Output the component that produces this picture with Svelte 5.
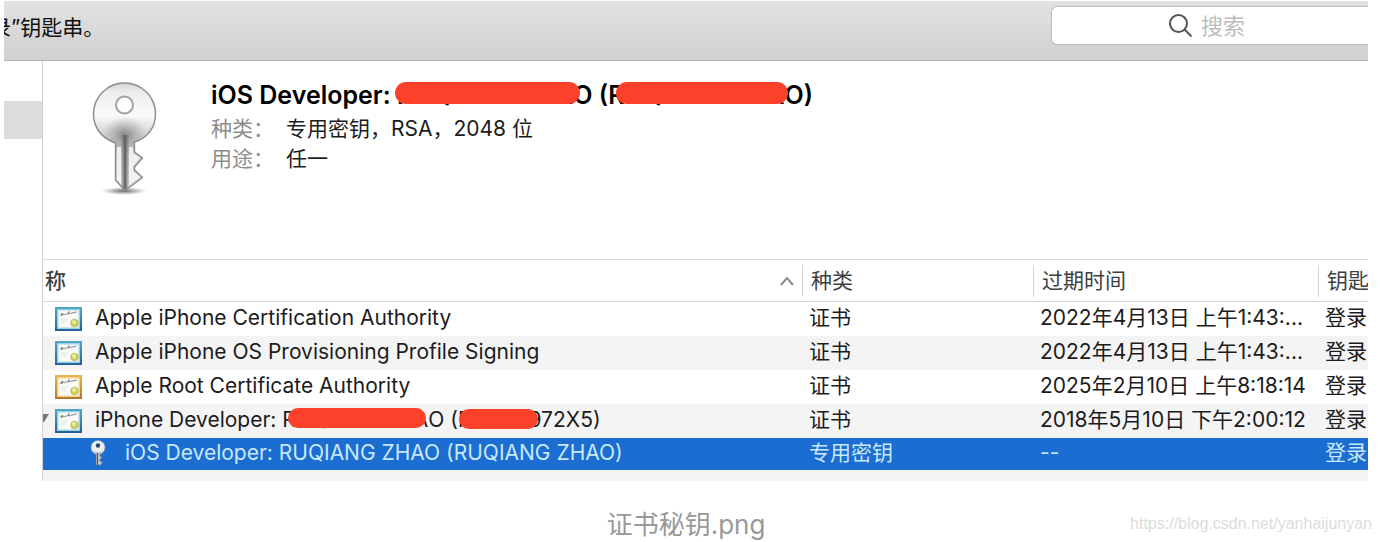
<script>
    const columns = [
        { key: "name", label: "称", sorted: true },
        { key: "kind", label: "种类" },
        { key: "expires", label: "过期时间" },
        { key: "keychain", label: "钥匙" },
    ];

    const items = [
        { icon: "blue", name: "Apple iPhone Certification Authority", kind: "证书", expires: "2022年4月13日 上午1:43:...", keychain: "登录" },
        { icon: "blue", name: "Apple iPhone OS Provisioning Profile Signing", kind: "证书", expires: "2022年4月13日 上午1:43:...", keychain: "登录" },
        { icon: "gold", name: "Apple Root Certificate Authority", kind: "证书", expires: "2025年2月10日 上午8:18:14", keychain: "登录" },
        { icon: "blue", name: "iPhone Developer: ", redacted: true, kind: "证书", expires: "2018年5月10日 下午2:00:12", keychain: "登录" },
        { icon: "key", name: "iOS Developer: RUQIANG ZHAO (RUQIANG ZHAO)", kind: "专用密钥", expires: "--", keychain: "登录" },
    ];

    let selected = $state(4);
    let query = $state("");
</script>

{#snippet certificate(tone)}
    <svg class="cert" viewBox="0 0 27 24" aria-hidden="true">
        <defs>
            <linearGradient id="frame-blue" x1="0" y1="0" x2="0" y2="1">
                <stop offset="0" stop-color="#4fa9c6" />
                <stop offset="1" stop-color="#245f9c" />
            </linearGradient>
            <linearGradient id="frame-gold" x1="0" y1="0" x2="0" y2="1">
                <stop offset="0" stop-color="#e9b752" />
                <stop offset="1" stop-color="#b87428" />
            </linearGradient>
        </defs>
        <rect width="27" height="24" fill="url(#frame-{tone})" />
        <rect x="2" y="2" width="23" height="20" fill={tone === "gold" ? "#f3d48e" : "#9bd3e6"} />
        <rect x="3.5" y="3.5" width="20" height="17" fill="#fbfcf9" />
        <path d="M5.500 8.500q1.500-3.500 2.200-1.800-.7 2-1.600 1.500 1.600.2 2.600-1 1 1.200 2-.4 1 1.300 2-.2l1.300-2-.6 2.200q1.600.2 2.400-1 .9 1.300 2-.1 1.300 1 2.300-.7l1.500.3" fill="none" stroke="#6b6c74" stroke-width=".9" />
        <path d="M6 12h7M6 14h6M7 16h4" stroke="#cfdae0" stroke-width=".7" />
        <circle cx="19.500" cy="16" r="3.800" fill="#cfcf5c" stroke="#aaa94b" stroke-width=".6" />
        <circle cx="19" cy="15" r="2" fill="#efedA0" />
    </svg>
{/snippet}

<figure>
    <div class="window">
        <header class="toolbar">
            <p class="hint">录”钥匙串。</p>
            <label class="search">
                <svg viewBox="0 0 24 24" aria-hidden="true">
                    <circle cx="9.500" cy="9.500" r="8.500" />
                    <path d="M15.500 15.500l7 7" />
                </svg>
                <input type="text" placeholder="搜索" aria-label="搜索" bind:value={query} />
            </label>
        </header>

        <div class="body">
            <aside><div class="current"></div></aside>

            <main>
                <section class="detail">
                    <svg class="big-key" viewBox="0 0 66 116" aria-hidden="true">
                        <defs>
                            <linearGradient id="metal" x1="0" y1="0" x2="0" y2="1">
                                <stop offset="0" stop-color="#cfcfcf" />
                                <stop offset=".1" stop-color="#ededed" />
                                <stop offset=".3" stop-color="#fafafa" />
                                <stop offset=".42" stop-color="#dcdcdc" />
                                <stop offset=".56" stop-color="#c4c4c4" />
                                <stop offset="1" stop-color="#e2e2e2" />
                            </linearGradient>
                            <radialGradient id="glow">
                                <stop offset="0" stop-color="#6c6c6c" stop-opacity=".75" />
                                <stop offset="1" stop-color="#999" stop-opacity="0" />
                            </radialGradient>
                            <linearGradient id="stem" x1="0" y1="0" x2="1" y2="0">
                                <stop offset="0" stop-color="#777" stop-opacity="0" />
                                <stop offset=".5" stop-color="#5a5a5a" />
                                <stop offset="1" stop-color="#777" stop-opacity="0" />
                            </linearGradient>
                            <radialGradient id="shadow">
                                <stop offset="0" stop-color="#333" stop-opacity=".75" />
                                <stop offset="1" stop-color="#666" stop-opacity="0" />
                            </radialGradient>
                            <clipPath id="key-clip">
                                <path d="M24.500 62C10 57 2.500 46 2.500 33a31 31 0 0 1 62 0c0 13-7.500 24-21 28v10l8 6-8 9v3l8 7.500-17.500 13L24.500 99z" />
                            </clipPath>
                        </defs>
                        <ellipse cx="33" cy="110" rx="23" ry="4" fill="url(#shadow)" />
                        <g clip-path="url(#key-clip)">
                            <rect width="66" height="116" fill="url(#metal)" />
                            <ellipse cx="33.500" cy="54" rx="23" ry="19" fill="url(#glow)" />
                            <path d="M26 66v33l4 5V66z" fill="#fff" opacity=".7" />
                            <path d="M38 66v38l11-8-7-6v-5l7-8-7-5v-6z" fill="#fff" opacity=".7" />
                            <rect x="29.500" y="54" width="9" height="56" fill="url(#stem)" />
                        </g>
                        <path
                            fill="none"
                            stroke="#8a8a8a"
                            stroke-width="1.400"
                            stroke-linejoin="round"
                            d="M24.500 62C10 57 2.500 46 2.500 33a31 31 0 0 1 62 0c0 13-7.500 24-21 28v10l8 6-8 9v3l8 7.500-17.500 13L24.500 99z"
                        />
                        <circle cx="33.500" cy="24" r="8.500" fill="#fff" stroke="#a2a2a2" stroke-width="2" />
                    </svg>
                    <div class="info">
                        <h1>iOS Developer: <span class="redacted">RUQIANG ZHA</span>O (R<span class="redacted wide">UQIANG ZHA</span>O)</h1>
                        <dl>
                            <dt>种类：</dt>
                            <dd>专用密钥，RSA，2048 位</dd>
                            <dt>用途：</dt>
                            <dd>任一</dd>
                        </dl>
                    </div>
                </section>

                <table>
                    <thead>
                        <tr>
                            {#each columns as column}
                                <th class={column.key}>
                                    <div>
                                        {column.label}
                                        {#if column.sorted}
                                            <svg class="sort" viewBox="0 0 14 10" aria-hidden="true"><path d="M1 9l6-7 6 7" /></svg>
                                        {/if}
                                    </div>
                                </th>
                            {/each}
                        </tr>
                    </thead>
                    <tbody>
                        {#each items as item, i}
                            <tr class:selected={selected === i} onclick={() => (selected = i)}>
                                <td>
                                    <div class="name" class:child={item.icon === "key"}>
                                        {#if item.icon === "key"}
                                            <svg class="small-key" viewBox="0 0 16 27" aria-hidden="true">
                                                <path d="M6 13h4v3l2 1.500-2 1.500v2l2.500 1.500-2 2.500H6z" fill="#c9cbd0" stroke="#65748c" stroke-width=".6" />
                                                <circle cx="8" cy="7.500" r="7" fill="#eceef1" stroke="#8a98ae" stroke-width=".6" />
                                                <path d="M3 10.500a7 7 0 0 0 10 0l-3 4H6z" fill="#b4b7be" />
                                                <circle cx="8" cy="5.500" r="2.200" fill="#20477f" />
                                                <path d="M7.500 13v12" stroke="#54565c" stroke-width="1.200" />
                                            </svg>
                                        {:else}
                                            {@render certificate(item.icon)}
                                        {/if}
                                        {#if item.redacted}
                                            <svg class="disclosure" viewBox="0 0 6 10" aria-hidden="true"><path d="M0 0h6L1 8H0z" /></svg>
                                            <span>{item.name}R<span class="redacted wide">UQIANG ZHA</span>O (R<span class="redacted blank"></span>972X5)</span>
                                        {:else}
                                            <span>{item.name}</span>
                                        {/if}
                                    </div>
                                </td>
                                <td>{item.kind}</td>
                                <td>{item.expires}</td>
                                <td>{item.keychain}</td>
                            </tr>
                        {/each}
                    </tbody>
                </table>
                <div class="next-row"></div>
            </main>
        </div>
    </div>
    <figcaption>证书秘钥.png</figcaption>
    <span class="watermark">https://blog.csdn.net/yanhaijunyan</span>
</figure>

<style>
    :global(body) {
        background: #fff;
    }

    figure {
        position: relative;
        margin: 0;
        padding: 1px 12px 0 4px;
        font-family: Inter, "Noto Sans CJK SC", sans-serif;
        color: #1c1c1c;
    }

    .window {
        overflow: hidden;
    }

    .toolbar {
        display: flex;
        justify-content: space-between;
        align-items: flex-start;
        height: 60px;
        box-sizing: border-box;
        padding-top: 5px;
        background: linear-gradient(#e2e2e2, #d0d0d0);
        border-bottom: 1px solid #b4b4b4;
    }

    .hint {
        margin: 6px 0 0 -14px;
        font-size: 21px;
        line-height: 32px;
        color: #111;
    }

    .search {
        display: flex;
        align-items: center;
        gap: 8px;
        width: 317px;
        height: 39px;
        box-sizing: border-box;
        padding-left: 117px;
        background: #fff;
        border: 1px solid #bcbcbc;
        border-right: 0;
        border-radius: 6px 0 0 6px;
    }

    .search svg {
        flex: none;
        width: 24px;
        height: 24px;
        fill: none;
        stroke: #555;
        stroke-width: 2;
    }

    .search input {
        flex: 1;
        min-width: 0;
        padding: 0;
        border: 0;
        outline: 0;
        background: none;
        font: inherit;
        font-size: 22px;
    }

    .search input::placeholder {
        color: #bdbdbd;
    }

    .body {
        display: flex;
    }

    aside {
        flex: none;
        width: 38px;
        padding-top: 40px;
        border-right: 1px solid #d2d2d2;
    }

    .current {
        height: 38px;
        background: #dcdcdc;
    }

    main {
        flex: 1;
        min-width: 0;
    }

    .detail {
        display: flex;
        gap: 54px;
        height: 178px;
        padding: 20px 0 0 48px;
    }

    .big-key {
        flex: none;
        width: 66px;
        height: 116px;
    }

    h1 {
        margin: 0;
        font-size: 25px;
        line-height: 28px;
        font-weight: 600;
        color: #000;
    }

    .redacted {
        position: relative;
    }

    .redacted::after {
        content: "";
        position: absolute;
        top: 2px;
        bottom: 6px;
        left: -2px;
        right: -7px;
        background: #fc412a;
        border-radius: 12px;
    }

    .redacted.wide::after {
        left: -8px;
        right: -4px;
    }

    .name .redacted.wide::after {
        top: 1px;
        bottom: 4px;
        right: 2px;
    }

    .redacted.blank {
        display: inline-block;
        width: 57px;
        height: 30px;
        vertical-align: bottom;
    }

    .redacted.blank::after {
        top: 4px;
        left: -13px;
        right: -9px;
    }

    dl {
        display: grid;
        grid-template-columns: 75px 1fr;
        margin: 5px 0 0;
        font-size: 21px;
        line-height: 30px;
    }

    dt {
        color: #8c8c8c;
    }

    dd {
        margin: 0;
    }

    table {
        width: 100%;
        table-layout: fixed;
        border-collapse: collapse;
        border-top: 1px solid #dadada;
        font-size: 21px;
        line-height: 30px;
    }

    th {
        height: 42px;
        box-sizing: border-box;
        padding: 0;
        text-align: left;
        font-weight: 400;
        color: #404040;
        border-bottom: 1px solid #dadada;
    }

    th div {
        display: flex;
        justify-content: space-between;
        align-items: center;
        height: 32px;
        padding: 0 8px;
        border-left: 1px solid #d4d4d4;
        white-space: nowrap;
    }

    th.name div {
        padding-left: 2px;
        border-left: 0;
        font-weight: 500;
    }

    th.kind {
        width: 231px;
    }

    th.expires {
        width: 285px;
    }

    th.keychain {
        width: 50px;
    }

    th.keychain div {
        padding-right: 0;
    }

    .sort {
        width: 14px;
        height: 10px;
        fill: none;
        stroke: #8c8c8c;
        stroke-width: 2;
    }

    td {
        height: 34px;
        padding: 0 0 2px 7px;
        box-sizing: border-box;
        white-space: nowrap;
    }

    tbody tr:nth-child(even) {
        background: #f4f4f4;
    }

    tbody tr.selected {
        background: #1b6dd1;
        color: #c9e8fb;
    }

    .selected td {
        height: 32px;
    }

    td .name {
        position: relative;
        display: flex;
        align-items: center;
        gap: 13px;
        padding-left: 5px;
        white-space: pre;
    }

    td .child {
        gap: 19px;
        padding-left: 40px;
    }

    .cert {
        flex: none;
        width: 27px;
        height: 24px;
        margin-top: 3px;
    }

    .small-key {
        flex: none;
        width: 16px;
        height: 27px;
        margin-top: 2px;
    }

    .disclosure {
        position: absolute;
        left: -7px;
        top: 9px;
        width: 6px;
        height: 10px;
        fill: #777;
    }

    .next-row {
        height: 11px;
        background: #f4f4f4;
    }

    figcaption {
        margin-top: 28px;
        text-align: center;
        font-size: 26px;
        line-height: 32px;
        color: #999;
    }

    .watermark {
        position: absolute;
        right: 8px;
        bottom: 7px;
        font-family: "Liberation Sans", sans-serif;
        font-size: 16px;
        line-height: 20px;
        color: #dcdcdc;
    }
</style>
